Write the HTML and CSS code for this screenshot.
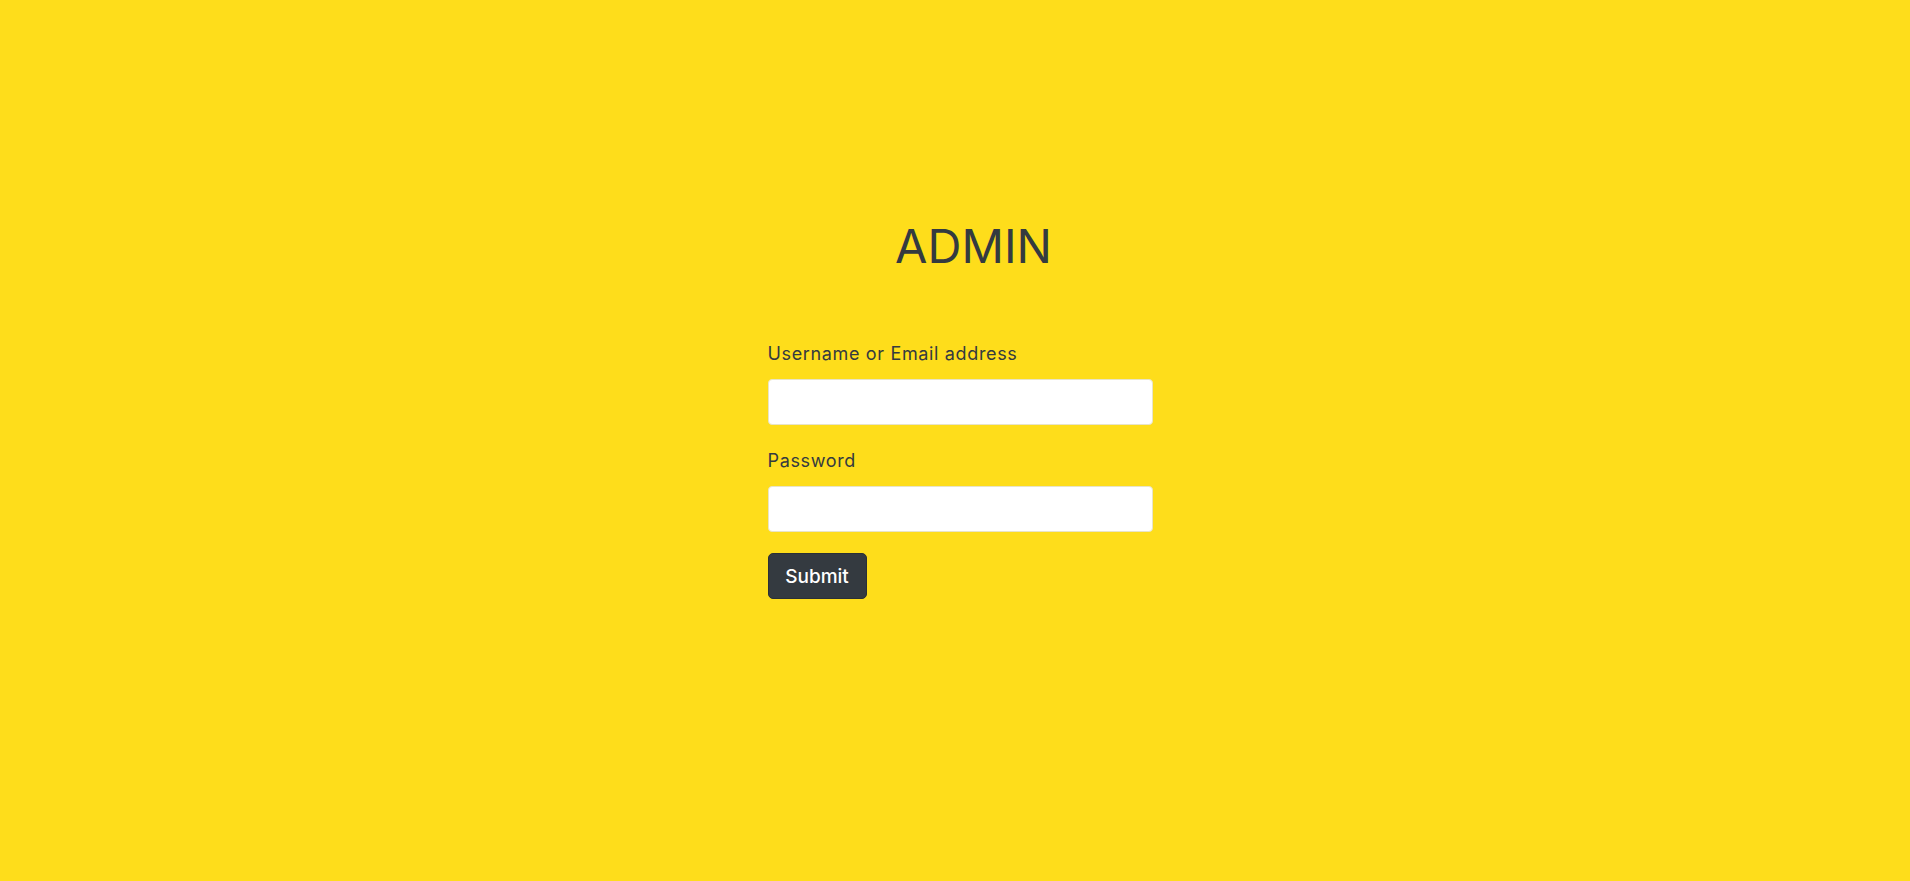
FILE: index.html
```html
<!DOCTYPE html>
<html>
<head>
<meta charset="utf-8">
<title>Admin</title>
<link rel="stylesheet" href="styles.css">
</head>
<body>
<main class="page">
  <div class="login">
    <h1 class="title">ADMIN</h1>
    <form class="form">
      <div class="field">
        <label class="label" for="user">Username or Email address</label>
        <input class="input" id="user" type="text">
      </div>
      <div class="field">
        <label class="label" for="pass">Password</label>
        <input class="input" id="pass" type="password">
      </div>
      <button class="btn" type="button">Submit</button>
    </form>
  </div>
</main>
</body>
</html>
```
FILE: styles.css
```css
html, body {
  margin: 0;
  padding: 0;
  height: 100%;
}
body {
  background: #fedd1b;
  color: #343a40;
  font-family: Inter, "Open Sans", sans-serif;
}
.page {
  display: flex;
  justify-content: center;
  padding-left: 10px;
  padding-top: 214px;
}
.login {
  width: 385px;
  display: flex;
  flex-direction: column;
}
.title {
  margin: 0 0 0 27px;
  text-align: center;
  font-size: 47px;
  font-weight: 400;
  line-height: 64px;
}
.form {
  margin-top: 62px;
  display: flex;
  flex-direction: column;
}
.field {
  display: flex;
  flex-direction: column;
}
.field + .field {
  margin-top: 22px;
}
.label {
  font-size: 18px;
  line-height: 27px;
  letter-spacing: 0.65px;
  margin-bottom: 12px;
}
.input {
  box-sizing: border-box;
  height: 46px;
  border: 1px solid #e8e4c8;
  border-radius: 4px;
  background: #fff;
  font: inherit;
}
.btn {
  align-self: flex-start;
  box-sizing: border-box;
  width: 99px;
  height: 46px;
  background: #343a40;
  color: #fff;
  border: 1px solid #2b3035;
  border-radius: 5px;
  font-family: inherit;
  font-size: 19px;
  font-weight: 500;
  padding: 0;
  margin-top: 21px;
}
```
